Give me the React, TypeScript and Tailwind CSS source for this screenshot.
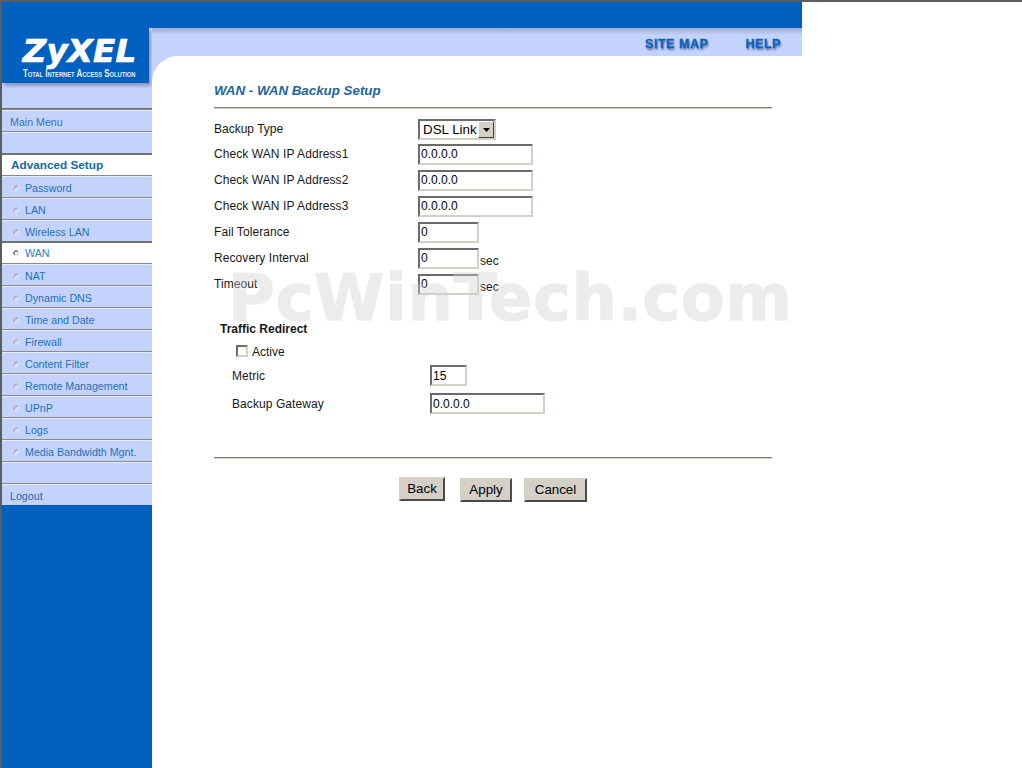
import React from "react";

const menu = ["Password", "LAN", "Wireless LAN", "WAN", "NAT", "Dynamic DNS", "Time and Date", "Firewall", "Content Filter", "Remote Management", "UPnP", "Logs", "Media Bandwidth Mgnt."];

function Bullet({ active }: { active?: boolean }) {
  return (
    <svg width="6" height="6" viewBox="0 0 6 6" className="mr-[6px] ml-[11px] shrink-0">
      <circle cx="3" cy="3" r="2.3" fill="none" stroke={active ? "#c8c8c8" : "#eef1fb"} strokeWidth="1" />
      <path d="M4.9 1.6A2.3 2.3 0 1 0 1.6 4.9" fill="none" stroke={active ? "#333333" : "#8f8f8f"} strokeWidth="1" />
    </svg>
  );
}

function NavRow({ label, active, children }: { label?: string; active?: boolean; children?: React.ReactNode }) {
  return (
    <div
      className={
        active
          ? "flex h-[22px] items-center border-t-2 border-[#707070] bg-white text-[10.67px] text-[#2a7fbf]"
          : "flex h-[22px] items-center border-t border-[#8a8a8a] bg-[#c4d3fc] pt-[3px] text-[10.67px] text-[#1c72bd] shadow-[inset_0_1px_0_#e6ecff]"
      }
    >
      {children}
      {label}
    </div>
  );
}

const inputCls =
  "h-[21px] border-2 border-t-[#6b6b6b] border-l-[#6b6b6b] border-r-[#d4d0c8] border-b-[#d4d0c8] bg-transparent pl-px text-xs leading-none text-black outline-none";

function Field({ label, value, width, suffix }: { label: string; value: string; width: string; suffix?: boolean }) {
  return (
    <div className="flex h-[26px] items-center">
      <span className="w-[204px] text-xs tracking-[0.08px] text-[#181818]">{label}</span>
      <input readOnly value={value} className={inputCls + " " + width} />
      {suffix && <span className="ml-px translate-y-[3px] text-xs text-[#181818]">sec</span>}
    </div>
  );
}

function Btn({ label, width }: { label: string; width: string }) {
  return (
    <button
      className={
        "h-[24px] border-2 border-t-[#d4d0c8] border-l-[#d4d0c8] border-r-[#4a4a4a] border-b-[#4a4a4a] bg-[#d4d0c8] pb-px text-[13.33px] leading-none text-black " +
        width
      }
    >
      {label}
    </button>
  );
}

export default function App() {
  return (
    <div className="relative h-[768px] w-[1022px] overflow-hidden border-t-2 border-l-2 border-[#5c5c5c] bg-white font-['Liberation_Sans',Arial,sans-serif]">
      <div className="h-[26px] w-[800px] bg-[#0060c0]" />
      <div className="flex h-[740px] w-[800px]">
        {/* sidebar */}
        <div className="flex w-[150px] shrink-0 flex-col bg-[#0060c0]">
          <div className="h-[80px] bg-[#c4d3fc]">
            <div className="flex h-[55px] w-[147px] flex-col items-center bg-[#0060c0] pl-[8px] shadow-[2px_3px_3px_#8d99bd]">
              <div className="mt-[9px] h-[29px] font-['DejaVu_Sans',sans-serif] text-[32.5px] leading-[29px] font-bold tracking-[0.2px] text-white italic [-webkit-text-stroke:0.7px_white]">
                ZyXEL
              </div>
              <div className="mt-[2px] origin-center scale-x-[0.72] text-[11px] leading-[11px] font-bold whitespace-nowrap text-[#e8eeff] [font-variant-caps:small-caps]">
                Total Internet Access Solution
              </div>
            </div>
          </div>
          <div className="border-t border-[#707070]">
            <NavRow>
              <span className="ml-2 text-[#3a72b5]">Main Menu</span>
            </NavRow>
          </div>
          <NavRow />
          <NavRow active>
            <span className="ml-[9px] text-[11.75px] font-bold text-[#126aa8]">Advanced Setup</span>
          </NavRow>
          {menu.map((m) => (
            <NavRow key={m} active={m === "WAN"}>
              <Bullet active={m === "WAN"} />
              {m}
            </NavRow>
          ))}
          <NavRow />
          <NavRow>
            <span className="ml-2 text-[#2c68ad]">Logout</span>
          </NavRow>
        </div>

        {/* main */}
        <div className="relative w-[650px] bg-[#c4d3fc]">
          <div className="flex h-[28px] justify-end gap-[37px] bg-gradient-to-b from-[#9eabcf] via-[#c4d3fc] via-[25%] to-[#c4d3fc] pt-[9px] pr-[21px] text-[12.5px] leading-[14px] font-bold tracking-[0.55px] text-[#0a62bd] [-webkit-text-stroke:0.3px_#0a62bd] [text-shadow:1px_2px_2px_#5a6ea0]">
            <span>SITE MAP</span>
            <span>HELP</span>
          </div>
          <div className="h-[712px] rounded-tl-[26px] bg-white pl-[62px]">
            <div className="w-[558px]">
              <div className="mb-px h-[52px] border-b border-[#808078] pt-[27px] text-[13.33px] leading-[16px] font-bold text-[#1c64a4] italic shadow-[0_1px_0_#d4d0c8]">
                WAN - WAN Backup Setup
              </div>
              <div className="flex h-[32px] items-end pb-px">
                <span className="w-[204px] -translate-y-[3px] text-xs text-[#181818]">Backup Type</span>
                <div className="flex h-[21px] w-[78px] items-center border-2 border-t-[#6b6b6b] border-l-[#6b6b6b] border-r-[#d4d0c8] border-b-[#d4d0c8] bg-white pl-[3px] text-[13.33px] text-black">
                  <span className="flex-1 whitespace-nowrap">DSL Link</span>
                  <div className="flex h-[17px] w-[16px] items-center justify-center border border-t-white border-l-white border-r-[#404040] border-b-[#404040] bg-[#d4d0c8]">
                    <svg width="7" height="4" viewBox="0 0 7 4">
                      <path d="M0 0h7L3.5 4z" fill="#000" />
                    </svg>
                  </div>
                </div>
              </div>
              <Field label="Check WAN IP Address1" value="0.0.0.0" width="w-[115px]" />
              <Field label="Check WAN IP Address2" value="0.0.0.0" width="w-[115px]" />
              <Field label="Check WAN IP Address3" value="0.0.0.0" width="w-[115px]" />
              <Field label="Fail Tolerance" value="0" width="w-[61px]" />
              <Field label="Recovery Interval" value="0" width="w-[61px]" suffix />
              <Field label="Timeout" value="0" width="w-[61px]" suffix />

              <div className="mt-[25px] ml-[6px] text-xs leading-[14px] font-bold text-[#181818]">Traffic Redirect</div>
              <div className="mt-[8px] ml-[22px] flex h-[14px] items-center">
                <span className="h-[12px] w-[12px] border-2 border-t-[#6b6b6b] border-l-[#6b6b6b] border-r-[#d4d0c8] border-b-[#d4d0c8]" />
                <span className="ml-[4px] translate-y-px text-xs text-[#181818]">Active</span>
              </div>
              <div className="mt-[7px] ml-[18px] flex h-[21px] items-center">
                <span className="w-[198px] text-xs tracking-[0.08px] text-[#181818]">Metric</span>
                <input readOnly value="15" className={inputCls + " w-[37px]"} />
              </div>
              <div className="mt-[7px] ml-[18px] flex h-[21px] items-center">
                <span className="w-[198px] text-xs tracking-[0.08px] text-[#181818]">Backup Gateway</span>
                <input readOnly value="0.0.0.0" className={inputCls + " w-[115px]"} />
              </div>

              <div className="mt-[43px] h-px bg-[#808078] shadow-[0_1px_0_#d4d0c8]" />
              <div className="mt-[19px] ml-[185px] flex">
                <Btn label="Back" width="w-[46px]" />
                <div className="ml-[15px]">
                  <Btn label="Apply" width="w-[52px]" />
                </div>
                <div className="ml-[12px]">
                  <Btn label="Cancel" width="w-[63px]" />
                </div>
              </div>
            </div>
          </div>
        </div>
      </div>

      {/* watermark */}
      <div className="pointer-events-none absolute top-[259px] left-[226px] font-['DejaVu_Sans',sans-serif] text-[64px] leading-[74px] font-bold tracking-[0.5px] whitespace-nowrap text-[#d0d0d0] opacity-40 [-webkit-text-stroke:1px_#d0d0d0]">
        PcWinTech.com
      </div>
    </div>
  );
}
